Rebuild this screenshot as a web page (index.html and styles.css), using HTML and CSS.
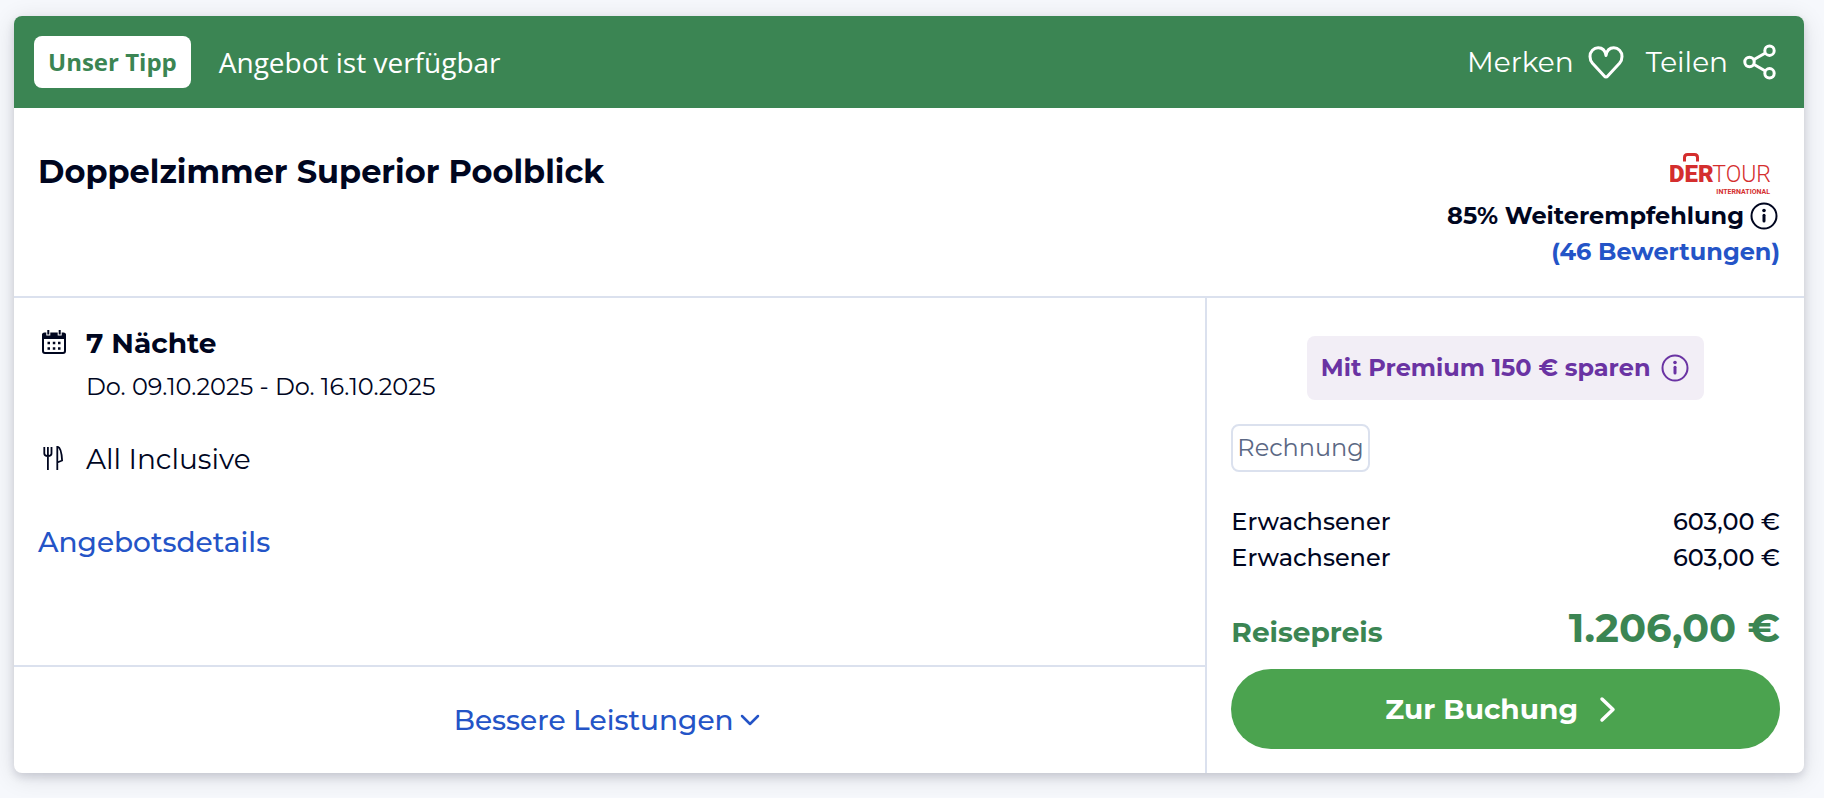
FILE: index.html
```
<!DOCTYPE html>
<html lang="de">
<head>
  <meta charset="UTF-8">
  <meta name="viewport" content="width=device-width, initial-scale=1.0">
  <title>Doppelzimmer Superior Poolblick</title>
  <link rel="stylesheet" href="styles.css">
</head>
<body>
  <article class="offer">
    <!-- Top bar -->
    <header class="offer-bar">
      <span class="tip">Unser Tipp</span>
      <span class="status">Angebot ist verfügbar</span>
      <div class="actions">
        <button type="button" class="action">
          Merken
          <svg class="action-icon" viewBox="0 0 36 36" fill="none" stroke="currentColor" stroke-width="3" stroke-linejoin="round">
            <path d="M18 33c-.6 0-1.100-.2-1.500-.7L4.500 19.300C2.800 17.300 2 15 2 12.400c0-5 3.700-8.700 8.200-8.700 3.900 0 7 2.500 7.800 7.800.8-5.300 3.900-7.800 7.800-7.800 4.500 0 8.200 3.700 8.200 8.700 0 2.600-.8 4.900-2.500 6.900L19.500 32.300c-.4.5-.9.7-1.500.7z"/>
          </svg>
        </button>
        <button type="button" class="action">
          Teilen
          <svg class="action-icon" viewBox="0 0 36 36" fill="none" stroke="currentColor" stroke-width="3">
            <circle cx="7.500" cy="18" r="4.700"/>
            <circle cx="27.500" cy="6.700" r="4.700"/>
            <circle cx="27.500" cy="29.300" r="4.700"/>
            <path d="M11.600 15.700l11.800-6.700M11.600 20.300l11.800 6.700"/>
          </svg>
        </button>
      </div>
    </header>

    <!-- Room and provider -->
    <section class="offer-head">
      <h1>Doppelzimmer Superior Poolblick</h1>
      <div class="provider">
        <svg class="logo" viewBox="0 0 102 44" role="img" aria-label="DERTOUR International">
          <path d="M14.500 9.500V5.500Q14.500 2.500 17.500 2.500H24.500Q27.500 2.500 27.500 5.500V9.500" fill="none" stroke="#d42e2e" stroke-width="3"/>
          <text class="logo-der" x="-1" y="30">DER</text>
          <text class="logo-tour" x="101" y="30" text-anchor="end">TOUR</text>
          <text class="logo-sub" x="100" y="42" text-anchor="end">INTERNATIONAL</text>
        </svg>
        <div class="rating">
          85% Weiterempfehlung
          <svg class="info" viewBox="0 0 28 28">
            <circle cx="14" cy="14" r="12.500" fill="none" stroke="currentColor" stroke-width="2"/>
            <circle cx="14" cy="8.500" r="1.800" fill="currentColor"/>
            <path d="M14 13.200V19" fill="none" stroke="currentColor" stroke-width="3" stroke-linecap="round"/>
          </svg>
        </div>
        <a href="#" class="reviews">(46 Bewertungen)</a>
      </div>
    </section>

    <div class="offer-body">
      <div class="details">
        <ul class="facts">
          <li>
            <svg class="fact-icon" viewBox="0 0 24 24">
              <rect x="1" y="4" width="22" height="19" rx="2" fill="none" stroke="currentColor" stroke-width="2"/>
              <path d="M0 9V5a2.500 2.500 0 0 1 2.500-2.500h19A2.500 2.500 0 0 1 24 5v4z" fill="currentColor"/>
              <path d="M6.300 0v5.500M17.700 0v5.500" stroke="#fff" stroke-width="4"/>
              <path d="M6.300 0v4.500M17.700 0v4.500" stroke="currentColor" stroke-width="2"/>
              <path d="M5.500 13h2.500M10.800 13h2.500M16 13h2.500M5.500 18.500h2.500M10.800 18.500h2.500M16 18.500h2.500" stroke="currentColor" stroke-width="2.500"/>
            </svg>
            <div>
              <strong>7 Nächte</strong>
              <p class="dates">Do. 09.10.2025 - Do. 16.10.2025</p>
            </div>
          </li>
          <li>
            <svg class="fact-icon" viewBox="0 0 24 24" fill="none" stroke="currentColor" stroke-width="1.800">
              <path d="M2.300 1v6.500q0 2.500 3.600 2.500t3.600-2.500V1M5.900 1v23"/>
              <path d="M15.300 24V.8c2.700 0 4.300 4.700 4.800 13.700l-4.800 2"/>
            </svg>
            <span>All Inclusive</span>
          </li>
        </ul>
        <a href="#" class="details-link">Angebotsdetails</a>
        <button type="button" class="upgrades">
          Bessere Leistungen
          <svg class="chevron" viewBox="0 0 20 20" fill="none" stroke="currentColor" stroke-width="2.500" stroke-linecap="round" stroke-linejoin="round">
            <path d="M2 6l8 8 8-8"/>
          </svg>
        </button>
      </div>

      <aside class="booking">
        <button type="button" class="premium">
          Mit Premium 150 € sparen
          <svg class="info" viewBox="0 0 28 28">
            <circle cx="14" cy="14" r="12.500" fill="none" stroke="currentColor" stroke-width="2"/>
            <circle cx="14" cy="8.500" r="1.800" fill="currentColor"/>
            <path d="M14 13.200V19" fill="none" stroke="currentColor" stroke-width="3" stroke-linecap="round"/>
          </svg>
        </button>
        <span class="payment">Rechnung</span>
        <table class="prices">
          <tbody>
            <tr><th scope="row">Erwachsener</th><td>603,00 €</td></tr>
            <tr><th scope="row">Erwachsener</th><td>603,00 €</td></tr>
          </tbody>
          <tfoot>
            <tr class="total"><th scope="row">Reisepreis</th><td>1.206,00 €</td></tr>
          </tfoot>
        </table>
        <button type="button" class="book">
          Zur Buchung
          <svg class="arrow" viewBox="0 0 28 28" fill="none" stroke="currentColor" stroke-width="3.500" stroke-linecap="round" stroke-linejoin="round">
            <path d="M8 4l11 10.500L8 25"/>
          </svg>
        </button>
      </aside>
    </div>
  </article>
</body>
</html>
```
FILE: styles.css
```
* {
  box-sizing: border-box;
}
body {
  margin: 0;
  padding: 16px 20px 24px 14px;
  background-color: #f6f8fc;
  color: #00061f;
  font-family: Montserrat, Inter, sans-serif;
  font-size: 28px;
  line-height: 36px;
}
h1, p, ul {
  margin: 0;
  padding: 0;
}
button {
  border: none;
  padding: 0;
  background: none;
  color: inherit;
  font: inherit;
  cursor: pointer;
}
a {
  color: #2454c7;
  text-decoration: none;
}
svg {
  flex: none;
}
.offer {
  background-color: #fff;
  border-radius: 8px;
  box-shadow: 0 4px 8px rgba(0, 6, 31, 0.12), 0 4px 24px rgba(0, 6, 31, 0.12);
}

/* top bar */
.offer-bar {
  display: flex;
  align-items: center;
  min-height: 92px;
  padding: 20px 26px 20px 20px;
  border-radius: 8px 8px 0 0;
  background-color: #3b8553;
  color: #fff;
  font-family: "Open Sans", sans-serif;
}
.tip {
  padding: 8px 14px;
  border-radius: 8px;
  background-color: #fff;
  color: #3b8553;
  font-size: 24px;
  font-weight: 700;
}
.status {
  margin-left: 28px;
}
.actions {
  display: flex;
  gap: 22px;
  margin-left: auto;
  font-family: Montserrat, Inter, sans-serif;
}
.action {
  display: flex;
  align-items: center;
  gap: 14px;
}
.action-icon {
  width: 36px;
  height: 36px;
}

/* room and provider */
.offer-head {
  display: flex;
  justify-content: space-between;
  padding: 40px 24px 26px;
  border-bottom: 2px solid #dbe1ee;
}
h1 {
  padding-top: 4px;
  font-size: 32px;
  line-height: 40px;
}
.provider {
  display: flex;
  flex-direction: column;
  align-items: flex-end;
  font-size: 24px;
  font-weight: 700;
}
.logo {
  width: 102px;
  height: 44px;
  margin: 4px 8px 2px 0;
  fill: #d42e2e;
  font-family: Roboto, sans-serif;
}
.logo-der {
  font-size: 24px;
  font-weight: 900;
}
.logo-tour {
  font-size: 23px;
  font-weight: 300;
}
.logo-sub {
  font-size: 7px;
  font-weight: 700;
}
.rating {
  display: flex;
  align-items: center;
  gap: 6px;
  padding-right: 2px;
}
.info {
  width: 28px;
  height: 28px;
}

/* body columns */
.offer-body {
  display: grid;
  grid-template-columns: 2fr 1fr;
}
.details {
  display: flex;
  flex-direction: column;
  border-right: 2px solid #dbe1ee;
}
.facts {
  display: grid;
  gap: 36px;
  padding: 27px 24px 0;
  list-style: none;
}
.facts li {
  display: flex;
  gap: 16px;
}
.fact-icon {
  width: 24px;
  height: 24px;
  margin: 5px 4px;
}
.dates {
  padding-top: 8px;
  font-size: 24px;
}
.details-link {
  align-self: flex-start;
  margin: 47px 24px 24px;
  font-weight: 500;
}
.upgrades {
  display: flex;
  justify-content: center;
  align-items: center;
  gap: 6px;
  min-height: 108px;
  margin-top: auto;
  padding-right: 6px;
  border-top: 2px solid #dbe1ee;
  color: #2454c7;
  font-weight: 500;
}
.chevron {
  width: 20px;
  height: 20px;
}

/* booking column */
.booking {
  display: flex;
  flex-direction: column;
  padding: 38px 24px 24px;
  font-size: 24px;
}
.premium {
  display: flex;
  align-items: center;
  align-self: center;
  gap: 11px;
  padding: 14px 15px 14px 14px;
  border-radius: 8px;
  background-color: #f2eef6;
  color: #6a33a3;
  font-weight: 700;
}
.payment {
  align-self: flex-start;
  margin: 24px 0 32px;
  padding: 4px;
  border: 2px solid #dbe1ee;
  border-radius: 8px;
  color: #5b6884;
}
.prices {
  border-collapse: collapse;
}
.prices th {
  padding: 0;
  font-weight: 500;
  text-align: left;
}
.prices td {
  padding: 0;
  font-weight: 500;
  text-align: right;
}
.prices .total th,
.prices .total td {
  padding-top: 28px;
  color: #3b8553;
  font-weight: 700;
  vertical-align: baseline;
}
.prices .total th {
  font-size: 28px;
}
.prices .total td {
  font-size: 40px;
  line-height: 48px;
}
.book {
  display: flex;
  justify-content: center;
  align-items: center;
  gap: 16px;
  min-height: 80px;
  margin-top: 17px;
  padding-right: 4px;
  border-radius: 40px;
  background-color: #4ba34f;
  color: #fff;
  font-size: 28px;
  font-weight: 700;
}
.arrow {
  width: 28px;
  height: 28px;
}
```
